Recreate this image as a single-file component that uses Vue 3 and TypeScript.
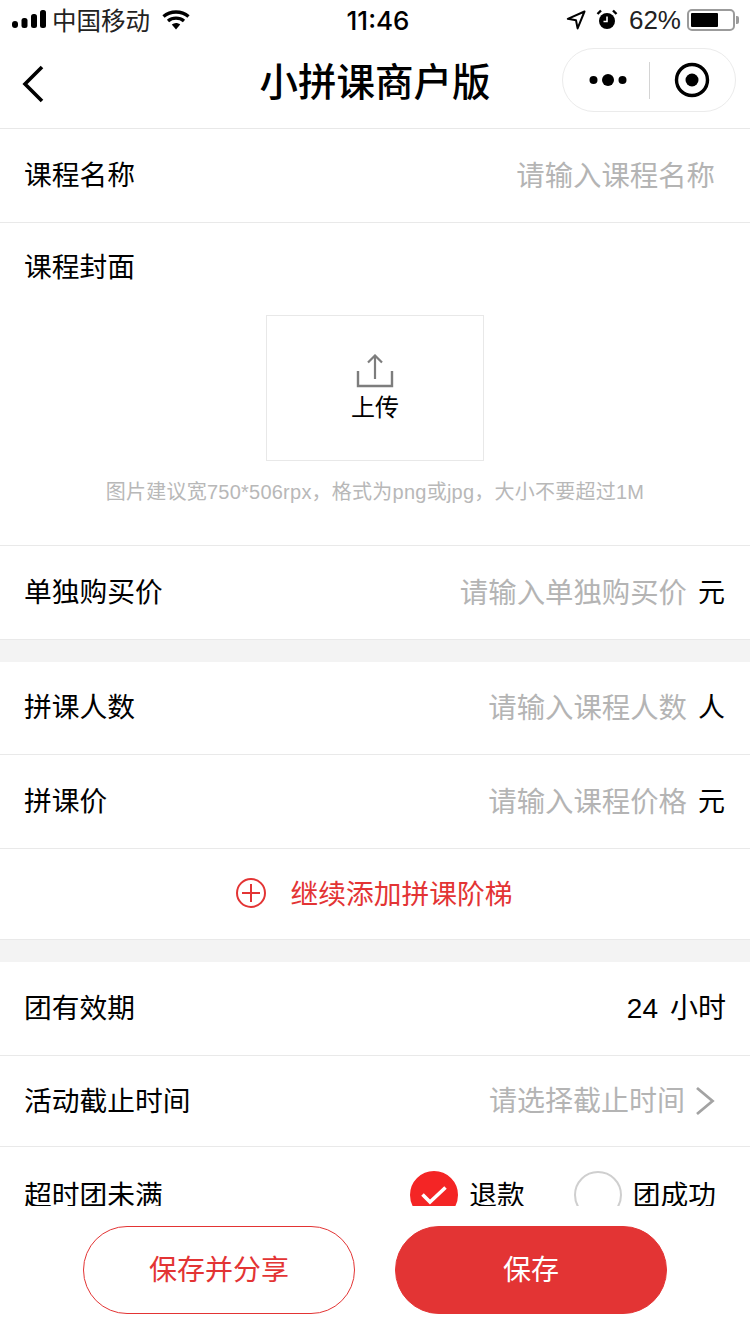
<script setup lang="ts">
interface Row {
  label: string
  placeholder?: string
  unit?: string
  tight?: boolean
}
const groupB: Row[] = [
  { label: '拼课人数', placeholder: '请输入课程人数', unit: '人', tight: true },
  { label: '拼课价', placeholder: '请输入课程价格', unit: '元' },
]
</script>

<template>
  <div class="page">
    <div class="status">
      <div class="status-left">
        <svg width="36" height="18" viewBox="0 0 36 18" class="signal">
          <rect x="0" y="11" width="6" height="7" rx="3" fill="#000" />
          <rect x="9.5" y="8" width="6" height="10" rx="2.5" fill="#000" />
          <rect x="19" y="4" width="6" height="14" rx="2.5" fill="#000" />
          <rect x="28" y="0" width="6" height="18" rx="2.5" fill="#000" />
        </svg>
        <span class="carrier">中国移动</span>
        <svg width="28" height="20" viewBox="0 0 28 20" class="wifi">
          <path d="M1.5 6.5C8.5 0.5 19.5 0.5 26.5 6.5" fill="none" stroke="#000" stroke-width="3.4" />
          <path d="M6 11C10.5 7.2 17.5 7.2 22 11" fill="none" stroke="#000" stroke-width="3.4" />
          <path d="M9.8 14.6C12.4 12.6 15.6 12.6 18.2 14.6L14 19.5Z" fill="#000" />
        </svg>
      </div>
      <span class="clock">11:46</span>
      <div class="status-right">
        <svg width="20" height="20" viewBox="0 0 20 20" class="loc">
          <path d="M18.5 1.5L1.8 8.8L10 10.2L11.6 18.4Z" fill="none" stroke="#000" stroke-width="2" stroke-linejoin="round" />
        </svg>
        <svg width="22" height="22" viewBox="0 0 22 22" class="alarm">
          <circle cx="11" cy="12" r="8" fill="#000" />
          <path d="M11 7.5V12.5H7.5" fill="none" stroke="#fff" stroke-width="1.6" />
          <path d="M1.5 5L5 1.5M20.5 5L17 1.5" stroke="#000" stroke-width="2.4" />
        </svg>
        <span class="pct">62%</span>
        <div class="battery"><div class="battery-fill"></div></div>
        <div class="battery-tip"></div>
      </div>
    </div>

    <div class="nav">
      <svg class="back" width="24" height="38" viewBox="0 0 24 38">
        <path d="M21 2L4 19L21 36" fill="none" stroke="#000" stroke-width="3.6" />
      </svg>
      <span class="title">小拼课商户版</span>
      <div class="capsule">
        <svg width="38" height="14" viewBox="0 0 38 14" class="dots">
          <circle cx="4.5" cy="7" r="4" fill="#000" />
          <circle cx="19" cy="7" r="6" fill="#000" />
          <circle cx="33.5" cy="7" r="4" fill="#000" />
        </svg>
        <div class="capsule-line"></div>
        <svg width="36" height="36" viewBox="0 0 36 36" class="target">
          <circle cx="18" cy="18" r="15.5" fill="none" stroke="#000" stroke-width="3.4" />
          <circle cx="18" cy="18" r="6.5" fill="#000" />
        </svg>
      </div>
    </div>

    <div class="content">
      <div class="row">
        <span class="label">课程名称</span>
        <span class="ph ph-name">请输入课程名称</span>
      </div>

      <div class="cover">
        <span class="label">课程封面</span>
        <div class="upload">
          <svg width="38" height="34" viewBox="0 0 38 34">
            <path d="M19 2V25M12 8.5L19 1.5L26 8.5" fill="none" stroke="#7d7d7d" stroke-width="2.2" />
            <path d="M2 17V32H36V17" fill="none" stroke="#7d7d7d" stroke-width="2.4" />
          </svg>
          <span class="upload-text">上传</span>
        </div>
        <p class="hint">图片建议宽750*506rpx，格式为png或jpg，大小不要超过1M</p>
      </div>

      <div class="row">
        <span class="label">单独购买价</span>
        <div class="value">
          <span class="ph">请输入单独购买价</span>
          <span class="unit">元</span>
        </div>
      </div>

      <div class="gap"></div>

      <div v-for="r in groupB" :key="r.label" class="row" :class="{ 'row-tight': r.tight }">
        <span class="label">{{ r.label }}</span>
        <div class="value">
          <span class="ph">{{ r.placeholder }}</span>
          <span class="unit">{{ r.unit }}</span>
        </div>
      </div>

      <div class="add">
        <svg class="add-icon" width="32" height="32" viewBox="0 0 32 32">
          <circle cx="16" cy="16" r="14" fill="none" stroke="#e33434" stroke-width="2" />
          <path d="M7 16H25M16 7V25" stroke="#e33434" stroke-width="2" />
        </svg>
        <span class="add-text">继续添加拼课阶梯</span>
      </div>

      <div class="gap"></div>

      <div class="row">
        <span class="label">团有效期</span>
        <span class="plain"><span class="hours">24</span>小时</span>
      </div>

      <div class="row row-short">
        <span class="label">活动截止时间</span>
        <div class="value">
          <span class="ph ph-deadline">请选择截止时间</span>
          <svg class="chev" width="20" height="30" viewBox="0 0 20 30">
            <path d="M2 2L17.5 15L2 28" fill="none" stroke="#a3a3a3" stroke-width="2.8" />
          </svg>
        </div>
      </div>

      <div class="row row-radio">
        <span class="label">超时团未满</span>
        <div class="radios">
          <div class="radio-item">
            <div class="radio radio-on">
              <svg width="28" height="22" viewBox="0 0 28 22">
                <path d="M2.5 10.5L10 18L25.5 3.5" fill="none" stroke="#fff" stroke-width="3.6" />
              </svg>
            </div>
            <span class="label">退款</span>
          </div>
          <div class="radio-item">
            <div class="radio"></div>
            <span class="label">团成功</span>
          </div>
        </div>
      </div>
    </div>

    <div class="footer">
      <button class="btn btn-outline"><span class="btn-text">保存并分享</span></button>
      <button class="btn btn-solid"><span class="btn-text">保存</span></button>
    </div>
  </div>
</template>

<style scoped>
.page {
  width: 750px;
  height: 1334px;
  display: flex;
  flex-direction: column;
  overflow: hidden;
  background: #fff;
  color: #000;
  font-family: "Noto Sans CJK SC", "Noto Sans", sans-serif;
}
.status {
  height: 40px;
  flex: none;
  position: relative;
  display: flex;
  align-items: center;
  justify-content: space-between;
  padding: 0 11px 0 12px;
}
.status-left, .status-right {
  display: flex;
  align-items: center;
}
.signal { margin-bottom: 2px; }
.carrier {
  font-size: 24.5px;
  line-height: 40px;
  margin-left: 4px;
  color: #222;
}
.wifi { margin-left: 12px; }
.clock {
  position: absolute;
  left: 6px;
  right: 0;
  top: 0;
  text-align: center;
  font-family: "Inter", "Liberation Sans", sans-serif;
  font-size: 26px;
  font-weight: 500;
  line-height: 41px;
}
.loc { margin-right: 10px; }
.alarm { margin-right: 11px; }
.pct {
  font-family: "Liberation Sans", sans-serif;
  font-size: 26px;
  line-height: 40px;
  margin-right: 6px;
  color: #222;
}
.battery {
  width: 48px;
  height: 22px;
  border: 2px solid #9b9b9b;
  border-radius: 5px;
  box-sizing: border-box;
  padding: 2px;
}
.battery-fill {
  width: 27px;
  height: 14px;
  background: #000;
  border-radius: 1px;
}
.battery-tip {
  width: 3px;
  height: 8px;
  margin-left: 1px;
  background: #9b9b9b;
  border-radius: 0 2px 2px 0;
}
.nav {
  height: 88px;
  flex: none;
  border-bottom: 1px solid #e8e8e8;
  position: relative;
  display: flex;
  align-items: center;
  justify-content: center;
}
.back {
  position: absolute;
  left: 21px;
  top: 25px;
}
.title {
  font-size: 38.5px;
  font-weight: 500;
  line-height: 52px;
  margin-bottom: 10px;
}
.capsule {
  position: absolute;
  left: 562px;
  top: 8px;
  width: 174px;
  height: 64px;
  box-sizing: border-box;
  border: 1px solid #ebebeb;
  border-radius: 32px;
  display: flex;
  align-items: center;
}
.dots { margin-left: 26px; }
.capsule-line {
  width: 1px;
  height: 37px;
  background: #d4d4d4;
  margin-left: 22px;
}
.target { margin-left: 24px; }
.content {
  flex: 1;
  min-height: 0;
  overflow: hidden;
}
.row {
  height: 93px;
  border-bottom: 1px solid #e9e9e9;
  display: flex;
  align-items: center;
  justify-content: space-between;
  padding: 0 25px 0 24px;
}
.row-tight { height: 92px; }
.row-short { height: 90px; }
.row-short .label { margin-bottom: 4px; }
.label {
  font-size: 27.75px;
  line-height: 40px;
  margin-bottom: 6px;
}
.ph {
  font-size: 28.4px;
  line-height: 40px;
  color: #b4b4b4;
  margin-bottom: 4px;
}
.ph-name { margin-right: 10px; }
.ph-deadline { font-size: 28px; }
.value {
  display: flex;
  align-items: center;
}
.unit {
  font-size: 27px;
  line-height: 40px;
  margin-left: 11px;
  margin-bottom: 4px;
}
.plain {
  font-family: "Liberation Sans", "Noto Sans CJK SC", sans-serif;
  font-size: 28px;
  line-height: 40px;
  margin-right: -1px;
}
.hours { margin-right: 12px; }
.cover {
  height: 323px;
  box-sizing: border-box;
  border-bottom: 1px solid #e9e9e9;
  display: flex;
  flex-direction: column;
  align-items: flex-start;
  padding: 22px 0 0 24px;
}
.upload {
  align-self: center;
  margin: 24px 24px 0 0;
  width: 218px;
  height: 146px;
  box-sizing: border-box;
  border: 1px solid #e8e8e8;
  display: flex;
  flex-direction: column;
  align-items: center;
  padding-top: 38px;
}
.upload-text {
  font-size: 24px;
  line-height: 34px;
  margin-top: 1px;
}
.hint {
  align-self: center;
  margin: 16px 24px 0 0;
  font-family: "Liberation Sans", "Noto Sans CJK SC", sans-serif;
  font-size: 20px;
  letter-spacing: 0.24px;
  line-height: 30px;
  color: #b8b8b8;
  white-space: nowrap;
}
.gap {
  height: 22px;
  background: #f3f3f3;
}
.add {
  height: 90px;
  border-bottom: 1px solid #e9e9e9;
  display: flex;
  align-items: center;
  justify-content: center;
  padding-right: 2px;
}
.add-icon { margin-bottom: 2px; }
.add-text {
  color: #e33434;
  font-size: 27.75px;
  line-height: 40px;
  margin-left: 23px;
  margin-bottom: 4px;
}
.chev { margin-left: 10px; margin-right: 10px; }
.row-radio {
  height: 90px;
  border-bottom: none;
  padding-right: 34px;
}
.row-radio .label {
  margin-bottom: 0;
  margin-top: 1px;
}
.radios {
  display: flex;
  align-items: flex-start;
}
.radio-item {
  display: flex;
  align-items: center;
}
.radio-item + .radio-item { margin-left: 49px; }
.radio {
  width: 48px;
  height: 48px;
  box-sizing: border-box;
  border-radius: 50%;
  border: 2px solid #cfcfcf;
  margin-right: 11px;
  margin-top: 6px;
  display: flex;
  align-items: center;
  justify-content: center;
}
.radio-on {
  background: #f42525;
  border-color: #f42525;
}
.footer {
  height: 128px;
  flex: none;
  background: #fff;
  display: flex;
  justify-content: center;
  gap: 40px;
  padding-top: 20px;
  box-sizing: border-box;
}
.btn {
  width: 272px;
  height: 88px;
  border-radius: 44px;
  font-family: inherit;
  font-size: 28px;
  padding: 0 0 4px;
  box-sizing: border-box;
}
.btn-outline {
  background: #fff;
  border: 1px solid #e33434;
  color: #e33434;
}
.btn-solid {
  background: #e33434;
  border: 1px solid #e33434;
  color: #fff;
}
</style>
